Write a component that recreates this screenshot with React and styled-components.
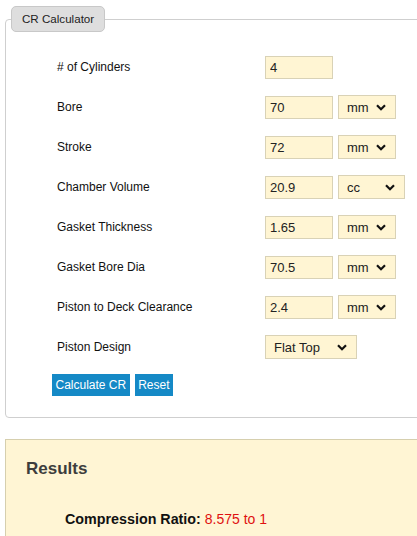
import React from "react"
import styled, { createGlobalStyle } from "styled-components"

const GlobalStyle = createGlobalStyle`
  body {
    margin: 0;
    background: #fff;
    overflow: hidden;
    font-family: "Liberation Sans", Arial, sans-serif;
  }
`

const rows = [
  { label: "# of Cylinders", value: "4" },
  { label: "Bore", value: "70", unit: "mm" },
  { label: "Stroke", value: "72", unit: "mm" },
  { label: "Chamber Volume", value: "20.9", unit: "cc", wide: true },
  { label: "Gasket Thickness", value: "1.65", unit: "mm" },
  { label: "Gasket Bore Dia", value: "70.5", unit: "mm" },
  { label: "Piston to Deck Clearance", value: "2.4", unit: "mm" },
]

function Chevron() {
  return (
    <ChevronIcon viewBox="0 0 10 7" width="10" height="7">
      <path d="M1 1.2 L5 5.2 L9 1.2" fill="none" stroke="#111" strokeWidth="2.2" />
    </ChevronIcon>
  )
}

function Dropdown({ width, children }) {
  return (
    <SelectWrap $width={width}>
      <Select defaultValue={children}>
        <option>{children}</option>
      </Select>
      <Chevron />
    </SelectWrap>
  )
}

export default function App() {
  return (
    <Page>
      <GlobalStyle />
      <Fieldset>
        <Legend>CR Calculator</Legend>
        <Body>
          <Form>
            {rows.map((row) => (
              <Row key={row.label}>
                <Label>{row.label}</Label>
                <Controls>
                  <Input defaultValue={row.value} />
                  {row.unit && (
                    <Dropdown width={row.wide ? 67 : 58}>{row.unit}</Dropdown>
                  )}
                </Controls>
              </Row>
            ))}
            <Row>
              <Label>Piston Design</Label>
              <Controls>
                <Dropdown width={92}>Flat Top</Dropdown>
              </Controls>
            </Row>
          </Form>
          <Buttons>
            <Button>Calculate CR</Button>
            <Button>Reset</Button>
          </Buttons>
        </Body>
      </Fieldset>
      <Results>
        <ResultsTitle>Results</ResultsTitle>
        <Ratio>
          <strong>Compression Ratio:</strong> <RatioValue>8.575 to 1</RatioValue>
        </Ratio>
      </Results>
    </Page>
  )
}

const Page = styled.div`
  padding: 0 0 0 5px;
  width: 460px;
`

const Fieldset = styled.fieldset`
  margin: 6px 0 0;
  padding: 0;
  border: 1px solid #cfcfcf;
  border-radius: 4px;
`

const Legend = styled.legend`
  margin-left: 5px;
  padding: 5px 10px 6px;
  background: #dedede;
  border: 1px solid #c8c8c8;
  border-radius: 5px;
  font-size: 11.6px;
  color: #222;
`

const Body = styled.div`
  padding: 15px 0 21px 46px;
`

const Form = styled.div`
  display: flex;
  flex-direction: column;
`

const Row = styled.div`
  display: grid;
  grid-template-columns: 213px auto;
  align-items: center;
  height: 40px;
`

const Label = styled.span`
  padding-left: 5px;
  font-size: 12px;
  color: #111;
`

const Controls = styled.div`
  display: flex;
  gap: 5px;
  align-items: center;
`

const Input = styled.input`
  box-sizing: border-box;
  width: 68px;
  height: 23px;
  padding: 0 4px;
  border: 1px solid #d9d2b6;
  background: #fff5d3;
  font-family: "Liberation Sans", Arial, sans-serif;
  font-size: 13px;
  color: #222;
  outline: none;
`

const SelectWrap = styled.div`
  position: relative;
  width: ${(p) => p.$width}px;
  height: 24px;
`

const Select = styled.select`
  appearance: none;
  box-sizing: border-box;
  width: 100%;
  height: 100%;
  padding: 0 0 0 8px;
  border: 1px solid #d9d2b6;
  background: #fff5d3;
  font-family: "Liberation Sans", Arial, sans-serif;
  font-size: 13px;
  color: #222;
  outline: none;
`

const ChevronIcon = styled.svg`
  position: absolute;
  right: 10px;
  top: 9px;
  pointer-events: none;
`

const Buttons = styled.div`
  display: flex;
  gap: 5px;
  margin-top: 7px;
`

const Button = styled.button`
  height: 22px;
  padding: 0 3.5px;
  border: none;
  background: #1589c6;
  color: #fff;
  font-family: "Liberation Sans", Arial, sans-serif;
  font-size: 12px;
`

const Results = styled.div`
  margin-top: 21px;
  padding: 19px 20px 40px;
  border-top: 1px solid #d6cfae;
  border-left: 1px solid #d6cfae;
  background: #fff5d4;
`

const ResultsTitle = styled.h3`
  margin: 0;
  font-size: 17px;
  font-weight: bold;
  color: #3d3d3d;
`

const Ratio = styled.p`
  margin: 32px 0 0 39px;
  font-size: 14px;
  color: #111;

  strong {
    font-size: 14.3px;
  }
`

const RatioValue = styled.span`
  color: #e01010;
`
